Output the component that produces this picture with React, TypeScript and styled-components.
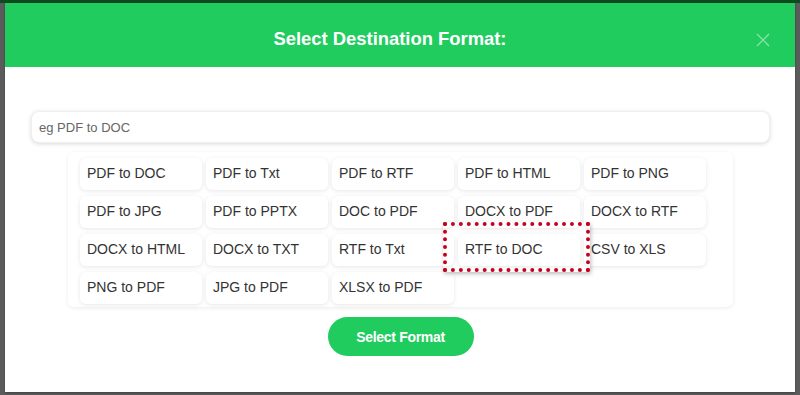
import styled, { createGlobalStyle } from "styled-components";

const GlobalStyle = createGlobalStyle`
  html, body {
    margin: 0;
    padding: 0;
    background: #5b5b5b;
    font-family: "Liberation Sans", Arial, sans-serif;
  }
`;

const Page = styled.div`
  width: 800px;
  height: 395px;
  background: #5b5b5b;
  border-top: 3px solid #0c4a1f;
  box-sizing: border-box;
  padding: 0 5px;
`;

const Modal = styled.div`
  width: 790px;
  height: 389px;
  background: #fff;
  display: flex;
  flex-direction: column;
  box-shadow: 0 1px 2px rgba(0, 0, 0, 0.3);
`;

const Header = styled.div`
  height: 64px;
  background: #21cc5f;
  display: flex;
  align-items: center;
  justify-content: center;
  position: relative;
  padding: 8px 20px 0 0;
  box-sizing: border-box;
`;

const Title = styled.h2`
  margin: 0;
  color: #fff;
  font-family: "Liberation Sans", Arial, sans-serif;
  font-size: 18.4px;
  font-weight: bold;
`;

const Close = styled.button`
  position: absolute;
  right: 25px;
  top: 30px;
  width: 14px;
  height: 14px;
  padding: 0;
  border: none;
  background: transparent;
  cursor: pointer;
`;

const Body = styled.div`
  padding: 44px 25px 0 26px;
  display: flex;
  flex-direction: column;
  align-items: center;
`;

const Search = styled.input`
  width: 100%;
  height: 32px;
  box-sizing: border-box;
  border: 1px solid #f0f0f0;
  border-radius: 8px;
  box-shadow: 0 1px 4px rgba(0, 0, 0, 0.15);
  padding: 0 7px;
  font-family: "Liberation Sans", Arial, sans-serif;
  font-size: 13px;
  color: #333;
  outline: none;
  &::placeholder {
    color: #666;
  }
`;

const Options = styled.div`
  position: relative;
  margin-top: 9px;
  width: 665px;
  box-sizing: border-box;
  padding: 6px 12px 3px;
  border-radius: 6px;
  box-shadow: 0 1px 4px rgba(0, 0, 0, 0.08);
  display: grid;
  grid-template-columns: repeat(5, 122px);
  column-gap: 4px;
  row-gap: 6px;
`;

const Option = styled.div`
  height: 32px;
  border-radius: 6px;
  box-shadow: 0 1px 4px rgba(0, 0, 0, 0.1);
  background: #fff;
  display: flex;
  align-items: center;
  padding: 0 0 3px 7px;
  box-sizing: border-box;
  font-size: 14px;
  color: #333;
`;

const Highlight = styled.div`
  position: absolute;
  left: 375px;
  top: 70px;
  width: 147px;
  height: 50px;
  box-sizing: border-box;
  border: 4px dotted #c8001e;
  box-shadow: 1px 2px 4px rgba(0, 0, 0, 0.25);
  pointer-events: none;
`;

const Submit = styled.button`
  margin-top: 10px;
  width: 146px;
  height: 39px;
  border: none;
  border-radius: 20px;
  background: #21cc5f;
  color: #fff;
  font-family: "Liberation Sans", Arial, sans-serif;
  font-size: 14px;
  font-weight: bold;
  letter-spacing: -0.3px;
  cursor: pointer;
`;

const formats = [
  "PDF to DOC",
  "PDF to Txt",
  "PDF to RTF",
  "PDF to HTML",
  "PDF to PNG",
  "PDF to JPG",
  "PDF to PPTX",
  "DOC to PDF",
  "DOCX to PDF",
  "DOCX to RTF",
  "DOCX to HTML",
  "DOCX to TXT",
  "RTF to Txt",
  "RTF to DOC",
  "CSV to XLS",
  "PNG to PDF",
  "JPG to PDF",
  "XLSX to PDF",
];

export default function App() {
  return (
    <>
      <GlobalStyle />
      <Page>
        <Modal>
          <Header>
            <Title>Select Destination Format:</Title>
            <Close aria-label="close">
              <svg width="14" height="14" viewBox="0 0 14 14">
                <path d="M1 1 L13 13 M13 1 L1 13" stroke="rgba(255,255,255,0.5)" strokeWidth="1.2" />
              </svg>
            </Close>
          </Header>
          <Body>
            <Search placeholder="eg PDF to DOC" />
            <Options>
              {formats.map((f) => (
                <Option key={f}>{f}</Option>
              ))}
              <Highlight />
            </Options>
            <Submit>Select Format</Submit>
          </Body>
        </Modal>
      </Page>
    </>
  );
}
